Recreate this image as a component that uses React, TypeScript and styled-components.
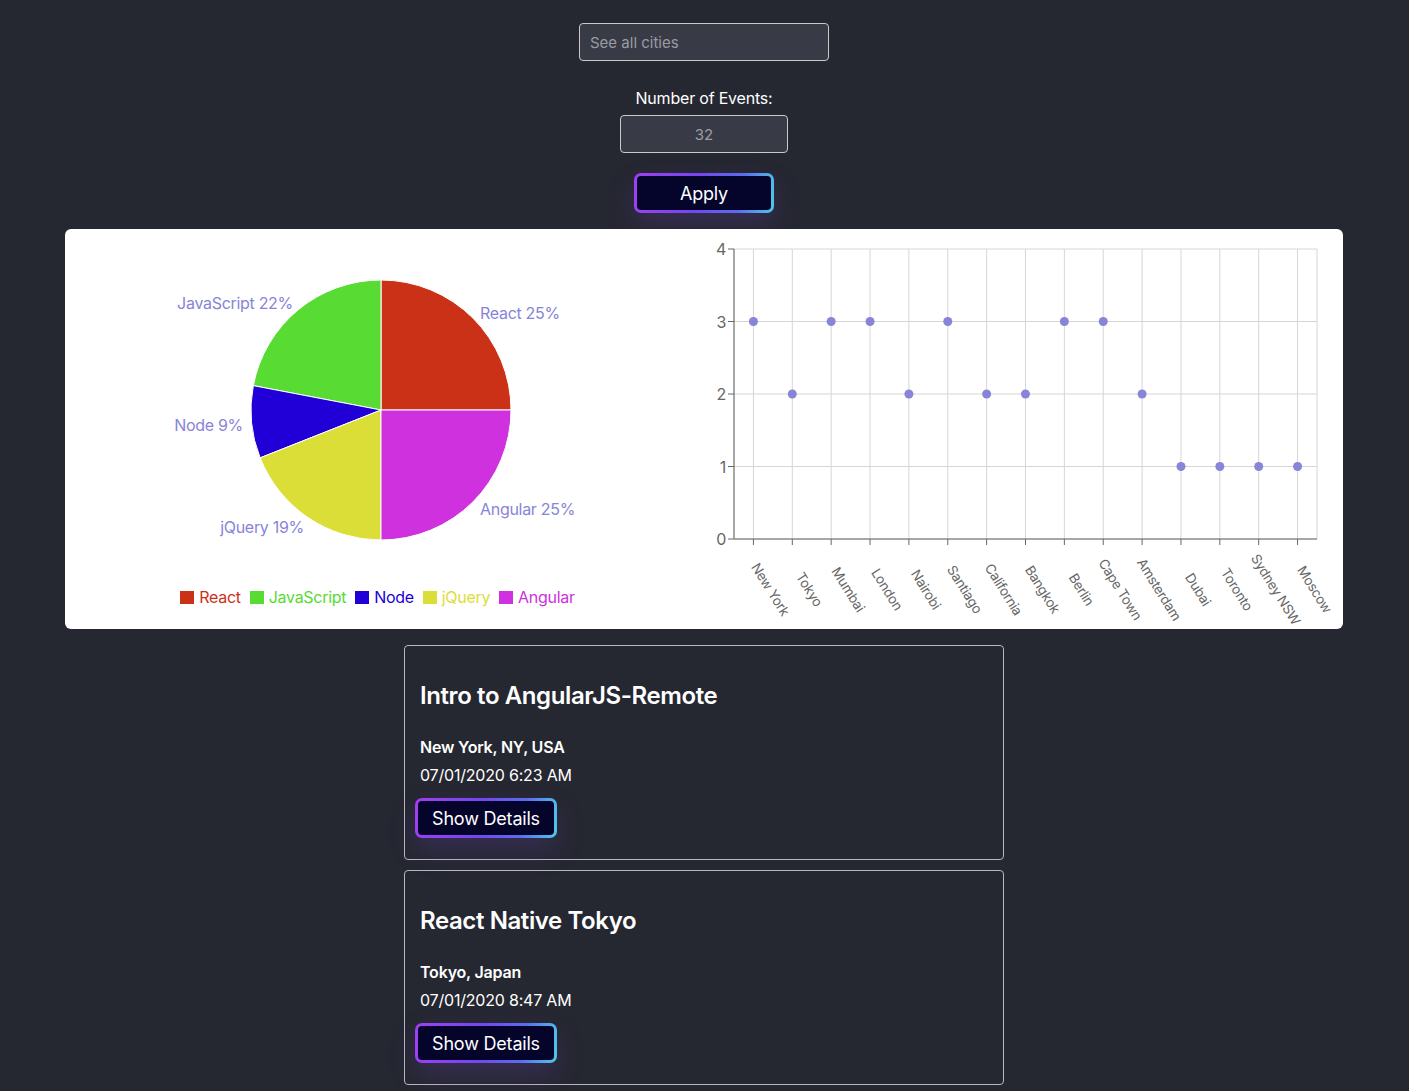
import React from 'react'
import styled, { createGlobalStyle } from 'styled-components'

const GlobalStyle = createGlobalStyle`
    body{
        margin:0;
        background:#252731;
        font-family:Inter, "Noto Sans", sans-serif;
        color:#fff;
    }
`
const Page = styled.div`
    display:flex;
    flex-direction:column;
    align-items:center;
    padding-top:23px;
    padding-bottom:40px;
    padding-right:1px;
`
const TextField = styled.input<{ $w: number; $center?: boolean }>`
    box-sizing:border-box;
    width:${p => p.$w}px;
    height:38px;
    background:#383a45;
    border:1px solid #c9c9cc;
    border-radius:4px;
    padding:0 10px;
    font-family:inherit;
    font-size:15px;
    color:#9c9ea6;
    text-align:${p => (p.$center ? 'center' : 'left')};
    outline:none;
    &::placeholder{color:#9a9ca5;}
`
const Label = styled.div`
    margin-top:27px;
    margin-bottom:7px;
    font-size:16px;
    line-height:20px;
    letter-spacing:-0.2px;
`
const GlowButton = styled.button<{ $w: number }>`
    box-sizing:border-box;
    width:${p => p.$w}px;
    height:40px;
    border:3px solid transparent;
    border-radius:7px;
    background:
        linear-gradient(#05042b,#05042b) padding-box,
        linear-gradient(100deg,#a13ff2 0%,#7446f0 45%,#5b6cee 75%,#4dcbea 100%) border-box;
    color:#fff;
    font-family:inherit;
    font-size:18px;
    letter-spacing:-0.2px;
    box-shadow:0 12px 28px rgba(120,70,200,0.22);
    cursor:pointer;
`
const ApplyButton = styled(GlowButton)`
    margin-top:20px;
`
const ChartPanel = styled.div`
    margin-top:16px;
    width:1278px;
    height:400px;
    background:#fff;
    border-radius:6px;
    display:grid;
    grid-template-columns:639px 639px;
    overflow:hidden;
    letter-spacing:-0.3px;
`
const PieColumn = styled.div`
    display:flex;
    flex-direction:column;
`
const Legend = styled.div`
    display:flex;
    justify-content:center;
    gap:9px;
    padding-right:14px;
    height:24px;
    align-items:center;
`
const LegendItem = styled.span<{ $c: string }>`
    display:flex;
    align-items:center;
    gap:5px;
    color:${p => p.$c};
    font-size:16px;
    &::before{
        content:'';
        width:14px;
        height:13px;
        background:${p => p.$c};
    }
`
const Card = styled.div`
    box-sizing:border-box;
    width:600px;
    margin-top:16px;
    & + &{margin-top:10px;}
    border:1px solid #b8b8bc;
    border-radius:4px;
    padding:0 10px 21px;
`
const Title = styled.h2`
    margin:35px 0 0;
    padding-left:5px;
    font-size:24px;
    line-height:29px;
    font-weight:600;
    letter-spacing:-0.4px;
`
const Location = styled.div`
    margin-top:27px;
    padding-left:5px;
    font-weight:600;
    font-size:16px;
    line-height:20px;
    letter-spacing:-0.2px;
`
const When = styled.div`
    margin-top:8px;
    padding-left:5px;
    font-size:16px;
    line-height:20px;
    letter-spacing:-0.2px;
`
const DetailsButton = styled(GlowButton)`
    margin-top:13px;
`

const slices = [
    { name: 'React', value: 25, color: '#cb3117' },
    { name: 'JavaScript', value: 22, color: '#58db33' },
    { name: 'Node', value: 9, color: '#2100d8' },
    { name: 'jQuery', value: 19, color: '#dbde37' },
    { name: 'Angular', value: 25, color: '#ce31dd' },
]
const pieLabels = [
    { t: 'React 25%', x: 415, y: 90, a: 'start' },
    { t: 'JavaScript 22%', x: 228, y: 80, a: 'end' },
    { t: 'Node 9%', x: 178, y: 202, a: 'end' },
    { t: 'jQuery 19%', x: 239, y: 304, a: 'end' },
    { t: 'Angular 25%', x: 415, y: 286, a: 'start' },
]

const PieChart = () => {
    const cx = 316, cy = 181, r = 130
    let start = 0
    const pt = (deg: number) => {
        const rad = (deg * Math.PI) / 180
        return `${cx + r * Math.cos(rad)},${cy - r * Math.sin(rad)}`
    }
    return (
        <svg width={639} height={356}>
            {slices.map(s => {
                const a0 = start
                const a1 = start + (s.value / 100) * 360
                start = a1
                const large = a1 - a0 > 180 ? 1 : 0
                return (
                    <path key={s.name}
                        d={`M${cx},${cy} L${pt(a0)} A${r},${r} 0 ${large} 0 ${pt(a1)} Z`}
                        fill={s.color} stroke='#fff' strokeWidth={1} />
                )
            })}
            {pieLabels.map(l => (
                <text key={l.t} x={l.x} y={l.y} fill='#8884d8' fontSize={16}
                    textAnchor={l.a as 'start' | 'end'}>{l.t}</text>
            ))}
        </svg>
    )
}

const cities: Array<[string, number]> = [
    ['New York', 3], ['Tokyo', 2], ['Mumbai', 3], ['London', 3], ['Nairobi', 2],
    ['Santiago', 3], ['California', 2], ['Bangkok', 2], ['Berlin', 3], ['Cape Town', 3],
    ['Amsterdam', 2], ['Dubai', 1], ['Toronto', 1], ['Sydney NSW', 1], ['Moscow', 1],
]

const ScatterChart = () => {
    const left = 30, right = 613, top = 20, bottom = 310
    const step = (right - left) / cities.length
    const yOf = (v: number) => bottom - ((bottom - top) / 4) * v
    const xOf = (i: number) => left + step * (i + 0.5)
    return (
        <svg width={639} height={400}>
            {[1, 2, 3, 4].map(v => (
                <line key={v} x1={left} x2={right} y1={yOf(v)} y2={yOf(v)} stroke='#d6d6d6' />
            ))}
            {cities.map((c, i) => (
                <line key={c[0]} x1={xOf(i)} x2={xOf(i)} y1={top} y2={bottom} stroke='#d6d6d6' />
            ))}
            <line x1={right} x2={right} y1={top} y2={bottom} stroke='#d6d6d6' />
            <line x1={left} x2={left} y1={top} y2={bottom} stroke='#8a8a8a' strokeWidth={1.5} />
            <line x1={left} x2={right} y1={bottom} y2={bottom} stroke='#8a8a8a' strokeWidth={1.5} />
            {[0, 1, 2, 3, 4].map(v => (
                <g key={v}>
                    <line x1={left - 6} x2={left} y1={yOf(v)} y2={yOf(v)} stroke='#666' />
                    <text x={left - 8} y={yOf(v) + 6} textAnchor='end' fontSize={16} fill='#666'>{v}</text>
                </g>
            ))}
            {cities.map((c, i) => (
                <g key={c[0]}>
                    <line x1={xOf(i)} x2={xOf(i)} y1={bottom} y2={bottom + 6} stroke='#666' />
                    <text transform={`translate(${xOf(i) + 13},${363}) rotate(58)`}
                        textAnchor='middle' fontSize={13.5} fill='#666'>{c[0]}</text>
                    <circle cx={xOf(i)} cy={yOf(c[1])} r={4.5} fill='#8884d8' />
                </g>
            ))}
        </svg>
    )
}

const events = [
    { title: 'Intro to AngularJS-Remote', loc: 'New York, NY, USA', when: '07/01/2020 6:23 AM' },
    { title: 'React Native Tokyo', loc: 'Tokyo, Japan', when: '07/01/2020 8:47 AM' },
]

export default function App() {
    return (
        <Page>
            <GlobalStyle />
            <TextField $w={250} placeholder='See all cities' />
            <Label>Number of Events:</Label>
            <TextField $w={168} $center defaultValue='32' />
            <ApplyButton $w={140}>Apply</ApplyButton>
            <ChartPanel>
                <PieColumn>
                    <PieChart />
                    <Legend>
                        {slices.map(s => <LegendItem key={s.name} $c={s.color}>{s.name}</LegendItem>)}
                    </Legend>
                </PieColumn>
                <ScatterChart />
            </ChartPanel>
            {events.map(e => (
                <Card key={e.title}>
                    <Title>{e.title}</Title>
                    <Location>{e.loc}</Location>
                    <When>{e.when}</When>
                    <DetailsButton $w={142}>Show Details</DetailsButton>
                </Card>
            ))}
        </Page>
    )
}
